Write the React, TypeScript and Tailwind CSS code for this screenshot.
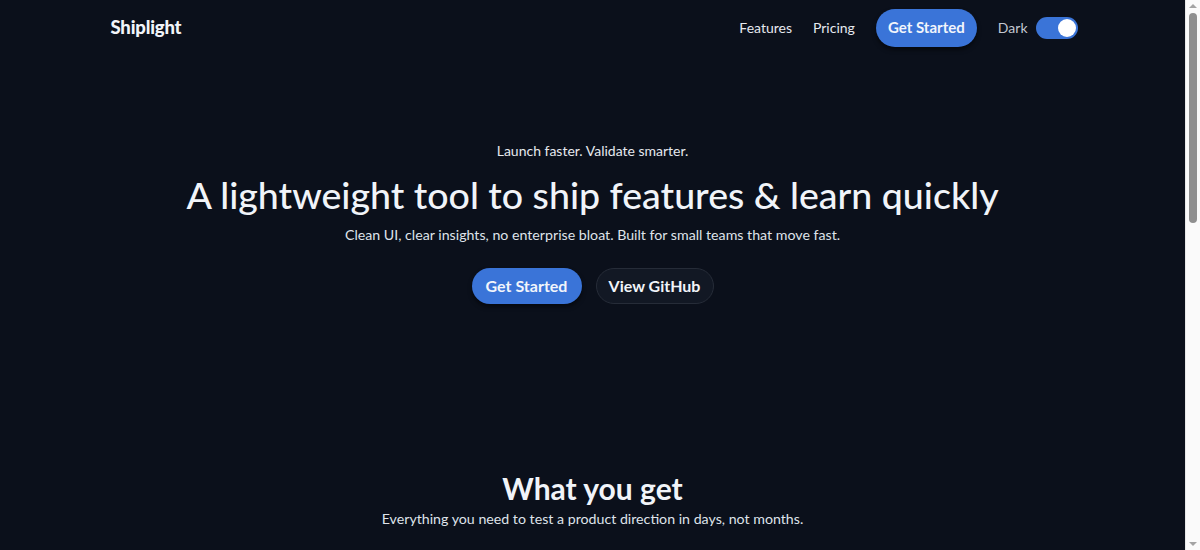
import { useState } from "react";

const features = [
    { title: "Feature flags", text: "Roll out to a slice of users and pull back in one click." },
    { title: "Simple analytics", text: "See what people actually use, without a data team." },
    { title: "Feedback inbox", text: "Collect comments right where the feature lives." },
];

const plans = [
    { name: "Starter", price: "$0", text: "For side projects and first experiments." },
    { name: "Team", price: "$19", text: "For small teams shipping every week." },
];

function Scrollbar() {
    return (
        <div className="sticky top-0 flex h-screen w-[15px] shrink-0 flex-col items-center border-l border-[#e8e8e8] bg-[#fafafa]">
            <div className="mt-[4px] h-0 w-0 border-x-[4px] border-b-[4px] border-x-transparent border-b-[#a3a3a3]" />
            <div className="mt-[5px] h-[210px] w-[8px] rounded-full bg-[#8f8f8f]" />
            <div className="flex-1" />
            <div className="mb-[4px] h-0 w-0 border-x-[4px] border-t-[4px] border-x-transparent border-t-[#a3a3a3]" />
        </div>
    );
}

export default function App() {
    const [dark, setDark] = useState(true);

    return (
        <div className="flex min-h-screen bg-[#0b101b] text-[#f1f4f9] font-['Lato',sans-serif]">
            <main className="flex-1">
                <header className="mx-auto flex h-[55px] w-[970px] items-center justify-between pl-[3px]">
                    <div className="text-[18.5px] font-black tracking-[-0.2px]">Shiplight</div>
                    <nav className="flex items-center">
                        <a className="text-[14px] text-[#e6e9ef]">Features</a>
                        <a className="ml-[21px] text-[14px] text-[#e6e9ef]">Pricing</a>
                        <button className="ml-[21px] h-[38px] w-[101px] rounded-full bg-[#3a74d8] text-[15px] font-bold text-[#f2f5fb] shadow-[0_3px_4px_rgba(0,0,0,0.5)]">
                            Get Started
                        </button>
                        <span className="ml-[21px] text-[14px] text-[#c2c7d0]">Dark</span>
                        <button
                            onClick={() => setDark(!dark)}
                            className={`ml-[8px] flex h-[22px] w-[42px] items-center rounded-full px-[2px] ${dark ? "justify-end bg-[#3a74d8]" : "justify-start bg-[#4b5563]"}`}
                        >
                            <span className="h-[18px] w-[18px] rounded-full bg-white" />
                        </button>
                    </nav>
                </header>

                <section className="flex flex-col items-center pt-[85px] text-center">
                    <p className="text-[14px] text-[#e6e9ef]">Launch faster. Validate smarter.</p>
                    <h1 className="mt-[10px] text-[37.5px] leading-[48px] font-medium">
                        A lightweight tool to ship features &amp; learn quickly
                    </h1>
                    <p className="mt-[5px] text-[14.2px] leading-[22px] text-[#dfe3ea]">
                        Clean UI, clear insights, no enterprise bloat. Built for small teams that move fast.
                    </p>
                    <div className="mt-[22px] flex gap-[14px]">
                        <button className="h-[36px] w-[110px] rounded-full bg-[#3a74d8] text-[16px] font-bold text-[#f2f5fb] shadow-[0_3px_4px_rgba(0,0,0,0.5)]">
                            Get Started
                        </button>
                        <button className="h-[36px] w-[118px] rounded-full border border-[#262c38] bg-[#121824] text-[16px] font-bold text-[#f1f4f9]">
                            View GitHub
                        </button>
                    </div>
                </section>

                <section className="flex flex-col items-center pt-[164px] text-center">
                    <h2 className="text-[30px] leading-[40px] font-bold">What you get</h2>
                    <p className="mt-[0px] text-[14.2px] leading-[22px] text-[#dfe3ea]">
                        Everything you need to test a product direction in days, not months.
                    </p>
                    <div className="mx-auto mt-[40px] grid w-[968px] grid-cols-3 gap-[20px] text-left">
                        {features.map((f) => (
                            <div key={f.title} className="rounded-xl border border-[#262c38] bg-[#121824] p-[20px]">
                                <div className="text-[17px] font-bold">{f.title}</div>
                                <div className="mt-[6px] text-[14px] text-[#c2c7d0]">{f.text}</div>
                            </div>
                        ))}
                    </div>
                </section>

                <section className="flex flex-col items-center pt-[140px] pb-[200px] text-center">
                    <h2 className="text-[30px] leading-[40px] font-bold">Pricing</h2>
                    <p className="mt-[2px] text-[15px] text-[#dfe3ea]">Start free. Upgrade when it sticks.</p>
                    <div className="mt-[40px] grid w-[640px] grid-cols-2 gap-[20px] text-left">
                        {plans.map((p) => (
                            <div key={p.name} className="rounded-xl border border-[#262c38] bg-[#121824] p-[24px]">
                                <div className="text-[17px] font-bold">{p.name}</div>
                                <div className="mt-[6px] text-[28px] font-bold">{p.price}</div>
                                <div className="mt-[6px] text-[14px] text-[#c2c7d0]">{p.text}</div>
                            </div>
                        ))}
                    </div>
                </section>
            </main>
            <Scrollbar />
        </div>
    );
}
